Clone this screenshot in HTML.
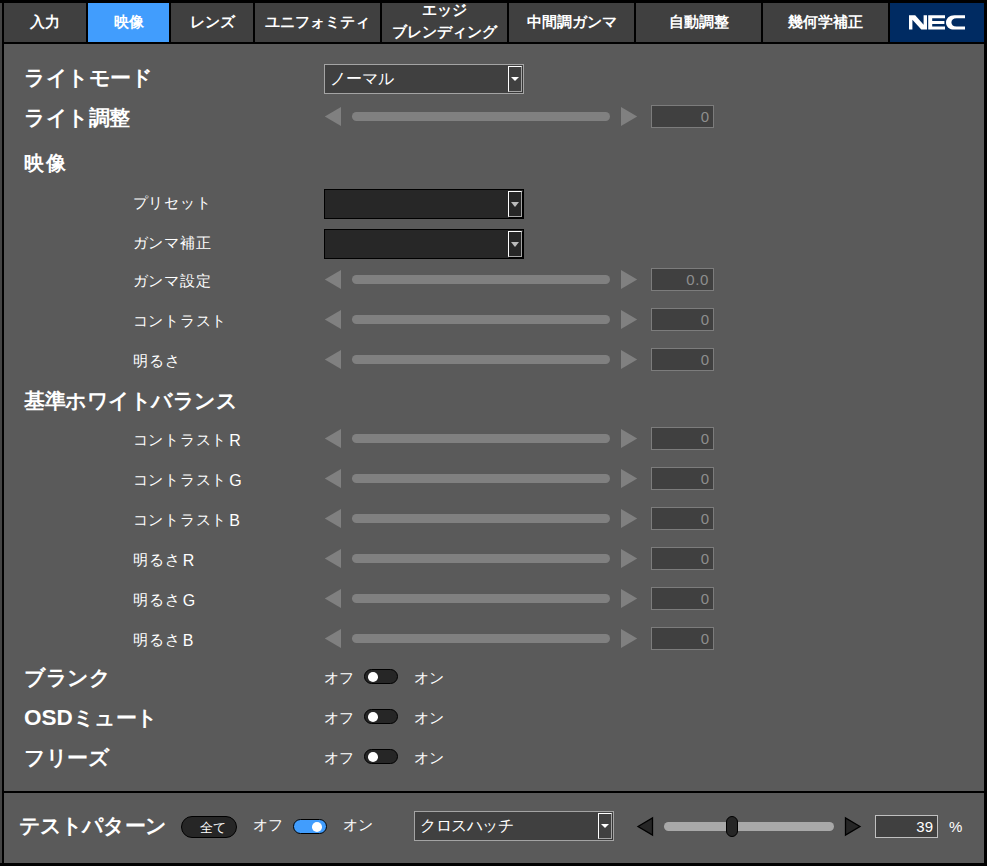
<!DOCTYPE html><html><head><meta charset="utf-8"><style>
*{margin:0;padding:0;box-sizing:border-box}
html,body{width:987px;height:866px;overflow:hidden;background:#000}
body{position:relative;font-family:"Liberation Sans",sans-serif;color:#fff}
div{position:absolute}
.tab{top:3px;height:39px;background:#404040;font-size:15px;font-weight:bold;text-align:center;line-height:37px;white-space:nowrap}
.tab.act{background:#419dfd}
.tab.two{line-height:22.5px}
.tab.two div{left:0;top:-4.2px;width:100%}
.h{left:24px;font-size:21px;font-weight:bold;letter-spacing:-0.5px;white-space:nowrap;line-height:24px}
.l{left:132.5px;font-size:15px;letter-spacing:0.8px;white-space:nowrap;line-height:18px;color:#fff}
.sel{left:324px;width:200px;height:30px;background:#404040;border:1px solid #a4a4a4}
.sel .t{left:5px;top:4.5px;font-size:16px;line-height:18px;white-space:nowrap}
.sel .b{left:183px;top:1px;width:14px;height:26px;border:1px solid;border-color:#fff #a4a4a4 #a4a4a4 #fff;background:#404040;box-shadow:1px 1px 0 #363636}
.sel .b i{position:absolute;left:2px;top:10px;width:0;height:0;border-left:4px solid transparent;border-right:4px solid transparent;border-top:4px solid #fff}
.sel.dk{background:#272727;border-color:#000}
.sel.dk .b{background:#272727;box-shadow:1px 1px 0 #000}
.sel.dk .b i{border-top-color:#bbb;border-left-width:4.5px;border-right-width:4.5px;border-top-width:5px;left:1.5px;top:10px}
.tk{left:352px;width:258px;height:9px;border-radius:5px;background:#808080}
.vb{left:651px;width:63px;height:23px;background:#404040;border:1px solid #7c7c7c;color:#8e8e8e;font-size:15px;text-align:right;padding-right:4px;line-height:22px}
.of{font-size:15px;line-height:18px;white-space:nowrap}
.sw{width:34px;height:15px;border-radius:8px;background:#262626;border:1px solid #000}
.sw i{position:absolute;left:3px;top:2px;width:10px;height:9.5px;border-radius:50%;background:#fff}
</style></head><body>
<div style="left:0;top:3px;width:2px;height:860px;background:#444"></div>

<div class="tab" style="left:4px;width:82px">入力</div>
<div class="tab act" style="left:88px;width:81px">映像</div>
<div class="tab" style="left:171px;width:82px">レンズ</div>
<div class="tab" style="left:255px;width:125px">ユニフォミティ</div>
<div class="tab two" style="left:382px;width:125px"><div>エッジ<br>ブレンディング</div></div>
<div class="tab" style="left:509px;width:125px">中間調ガンマ</div>
<div class="tab" style="left:636px;width:125px">自動調整</div>
<div class="tab" style="left:763px;width:125px">幾何学補正</div>
<div class="tab" style="left:890px;width:94px;background:#002b62"><svg width="94" height="39" style="position:absolute;left:0;top:0"><g transform="translate(19,12.2)" fill="#fff"><path d="M0,0H6.2L14.6,9.6V0H18V14.4H12.3L3.4,4.6V14.4H0Z"/><path d="M19.2,0H36V3.1H23.2V5.8H35.4V8.7H23.2V11.3H36V14.4H19.2Z"/><path d="M56,0H45.5C40.3,0 37,3.2 37,7.2C37,11.3 40.3,14.4 45.5,14.4H56V11.3H47.5C44.3,11.3 42.4,9.5 42.4,7.2C42.4,4.9 44.3,3.1 47.5,3.1H56Z"/></g></svg></div>
<div style="left:4px;top:44px;width:980px;height:747px;background:#5a5a5a"></div>
<div style="left:4px;top:793px;width:980px;height:70px;background:#5a5a5a"></div>
<div class="h" style="top:66px">ライトモード</div>
<div class="sel" style="top:64px"><div class="t">ノーマル</div><div class="b"><i></i></div></div>
<div class="h" style="top:106px">ライト調整</div>
<div class="tk" style="top:112.0px"></div>
<div class="vb" style="top:105.0px">0</div>
<div class="h" style="top:151.5px"><span style="font-size:19.5px;letter-spacing:1.5px;position:relative;top:-0.5px">映像</span></div>
<div class="l" style="top:194px">プリセット</div>
<div class="sel dk" style="top:189px"><div class="t"></div><div class="b"><i></i></div></div>
<div class="l" style="top:234px">ガンマ補正</div>
<div class="sel dk" style="top:229px"><div class="t"></div><div class="b"><i></i></div></div>
<div class="l" style="top:272px">ガンマ設定</div>
<div class="tk" style="top:275.0px"></div>
<div class="vb" style="top:268.0px"><span style="letter-spacing:0.6px">0.0</span></div>
<div class="l" style="top:312px">コントラスト</div>
<div class="tk" style="top:315.0px"></div>
<div class="vb" style="top:308.0px">0</div>
<div class="l" style="top:352px"><span style="letter-spacing:1.3px">明るさ</span></div>
<div class="tk" style="top:355.0px"></div>
<div class="vb" style="top:348.0px">0</div>
<div class="h" style="top:389px">基準ホワイトバランス</div>
<div class="l" style="top:431px">コントラスト<span style="font-size:16px;letter-spacing:0;position:relative;top:0.5px;left:-2.5px"> R</span></div>
<div class="tk" style="top:434.0px"></div>
<div class="vb" style="top:427.0px">0</div>
<div class="l" style="top:471px">コントラスト<span style="font-size:16px;letter-spacing:0;position:relative;top:0.5px;left:-2.5px"> G</span></div>
<div class="tk" style="top:474.0px"></div>
<div class="vb" style="top:467.0px">0</div>
<div class="l" style="top:511px">コントラスト<span style="font-size:16px;letter-spacing:0;position:relative;top:0.5px;left:-2.5px"> B</span></div>
<div class="tk" style="top:514.0px"></div>
<div class="vb" style="top:507.0px">0</div>
<div class="l" style="top:551px"><span style="letter-spacing:1.3px">明るさ</span><span style="font-size:16px;letter-spacing:0;position:relative;top:0.5px;left:-3px"> R</span></div>
<div class="tk" style="top:554.0px"></div>
<div class="vb" style="top:547.0px">0</div>
<div class="l" style="top:591px"><span style="letter-spacing:1.3px">明るさ</span><span style="font-size:16px;letter-spacing:0;position:relative;top:0.5px;left:-3px"> G</span></div>
<div class="tk" style="top:594.0px"></div>
<div class="vb" style="top:587.0px">0</div>
<div class="l" style="top:631px"><span style="letter-spacing:1.3px">明るさ</span><span style="font-size:16px;letter-spacing:0;position:relative;top:0.5px;left:-3px"> B</span></div>
<div class="tk" style="top:634.0px"></div>
<div class="vb" style="top:627.0px">0</div>
<svg width="987" height="866" style="position:absolute;left:0;top:0" fill="#808080"><path d="M324.8,116.5L341,107.0V126.0Z"/><path d="M637.2,116.5L621,107.0V126.0Z"/><path d="M324.8,279.5L341,270.0V289.0Z"/><path d="M637.2,279.5L621,270.0V289.0Z"/><path d="M324.8,319.5L341,310.0V329.0Z"/><path d="M637.2,319.5L621,310.0V329.0Z"/><path d="M324.8,359.5L341,350.0V369.0Z"/><path d="M637.2,359.5L621,350.0V369.0Z"/><path d="M324.8,438.5L341,429.0V448.0Z"/><path d="M637.2,438.5L621,429.0V448.0Z"/><path d="M324.8,478.5L341,469.0V488.0Z"/><path d="M637.2,478.5L621,469.0V488.0Z"/><path d="M324.8,518.5L341,509.0V528.0Z"/><path d="M637.2,518.5L621,509.0V528.0Z"/><path d="M324.8,558.5L341,549.0V568.0Z"/><path d="M637.2,558.5L621,549.0V568.0Z"/><path d="M324.8,598.5L341,589.0V608.0Z"/><path d="M637.2,598.5L621,589.0V608.0Z"/><path d="M324.8,638.5L341,629.0V648.0Z"/><path d="M637.2,638.5L621,629.0V648.0Z"/></svg>
<div class="h" style="top:666px">ブランク</div>
<div class="of" style="left:324px;top:669px">オフ</div>
<div class="sw" style="left:364px;top:669px"><i></i></div>
<div class="of" style="left:414px;top:669px">オン</div>
<div class="h" style="top:706px"><span style="font-size:22.5px;letter-spacing:0">OSD</span>ミュート</div>
<div class="of" style="left:324px;top:709px">オフ</div>
<div class="sw" style="left:364px;top:709px"><i></i></div>
<div class="of" style="left:414px;top:709px">オン</div>
<div class="h" style="top:746px">フリーズ</div>
<div class="of" style="left:324px;top:749px">オフ</div>
<div class="sw" style="left:364px;top:749px"><i></i></div>
<div class="of" style="left:414px;top:749px">オン</div>
<div class="h" style="left:19px;top:814px;letter-spacing:-0.9px">テストパターン</div>
<div style="left:181px;top:816px;width:56px;height:22px;border-radius:11px;background:#262626;border:1px solid #000"><div style="left:18px;top:2.5px;font-size:12.5px;line-height:16px;white-space:nowrap">全て</div></div>
<div class="of" style="left:253px;top:816px">オフ</div>
<div class="sw" style="left:293px;top:819px;background:#419dfd"><i style="left:18px"></i></div>
<div class="of" style="left:343px;top:816px">オン</div>
<div class="sel" style="left:414px;top:811px;height:30px"><div class="t" style="letter-spacing:-0.5px">クロスハッチ</div><div class="b"><i></i></div></div>
<svg width="987" height="866" style="position:absolute;left:0;top:0"><path d="M638,826.5L652.5,818V835Z" fill="#262626" stroke="#000" stroke-width="1.3"/><path d="M860,826.5L845.5,818V835Z" fill="#262626" stroke="#000" stroke-width="1.3"/></svg>
<div style="left:664px;top:822px;width:170px;height:9px;border-radius:5px;background:#a8a8a8"></div>
<div style="left:726px;top:816px;width:12px;height:21px;border-radius:6px;background:#262626;border:1.5px solid #000"></div>
<div class="vb" style="left:875px;top:815px;color:#fff;border-color:#c0c0c0">39</div>
<div class="of" style="left:949px;top:818px;font-size:15px">%</div>
</body></html>
